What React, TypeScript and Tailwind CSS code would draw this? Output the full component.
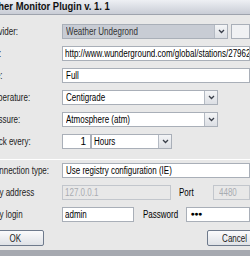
import React from "react";

const Arrow = () => (
  <div className="w-[13px] h-full shrink-0 border-l border-[#b4bac3] bg-gradient-to-b from-[#f4f5f7] to-[#dcdfe4] flex items-center justify-center">
    <svg width="7" height="5" viewBox="0 0 7 5">
      <path d="M1 1 L3.5 3.5 L6 1" stroke="#3a3f4a" strokeWidth="1.3" fill="none" />
    </svg>
  </div>
);

function T({ children, className = "" }: { children: React.ReactNode; className?: string }) {
  return (
    <span className={`inline-block whitespace-nowrap origin-left scale-x-[0.8] ${className}`}>{children}</span>
  );
}

function Label({ text, shift }: { text: string; shift: string }) {
  return (
    <div className="w-[62px] shrink-0 whitespace-nowrap text-[#222]">
      <T className={shift}>{text}</T>
    </div>
  );
}

export default function App() {
  return (
    <div
      className="w-[250px] h-[256px] overflow-hidden bg-[#e8e8e8] flex flex-col text-[10px] text-black"
      style={{ fontFamily: '"Liberation Sans", Arial, sans-serif' }}
    >
      <div className="h-[15px] shrink-0 bg-gradient-to-b from-[#eef0f4] to-[#c9cdd6] border-b border-[#9ea3ad] flex items-center whitespace-nowrap">
        <T className="ml-[-24px] font-bold text-[11.5px] text-[#111] scale-x-[0.82]">Weather Monitor Plugin v. 1. 1</T>
      </div>

      <div className="flex flex-col gap-[7px] mt-[9px]">
        <div className="flex items-center h-[15px]">
          <Label text="Provider:" shift="ml-[-14px]" />
          <div className="w-[178px] h-full flex border border-[#a9afb8] bg-[#c8ccd4]">
            <div className="flex-1 pl-[3px] flex items-center text-[#333]"><T>Weather Undegrond</T></div>
            <Arrow />
          </div>
          <div className="ml-[3px] w-[20px] h-full border border-[#a9afb8] bg-[#f0f1f3]" />
        </div>

        <div className="flex items-center h-[15px]">
          <Label text="URL:" shift="ml-[-17px]" />
          <div className="w-[200px] h-full border border-[#a9afb8] bg-white pl-[2px] flex items-center overflow-hidden">
            <T>http://www.wunderground.com/global/stations/27962</T>
          </div>
        </div>

        <div className="flex items-center h-[15px]">
          <Label text="Type:" shift="ml-[-17px]" />
          <div className="w-[200px] h-full border border-[#a9afb8] bg-white pl-[3px] flex items-center"><T>Full</T></div>
        </div>

        <div className="flex items-center h-[15px]">
          <Label text="Temperature:" shift="ml-[-17px]" />
          <div className="w-[156px] h-full flex border border-[#a9afb8] bg-white">
            <div className="flex-1 pl-[3px] flex items-center"><T>Centigrade</T></div>
            <Arrow />
          </div>
        </div>

        <div className="flex items-center h-[15px]">
          <Label text="Pressure:" shift="ml-[-14px]" />
          <div className="w-[156px] h-full flex border border-[#a9afb8] bg-white">
            <div className="flex-1 pl-[3px] flex items-center"><T>Atmosphere (atm)</T></div>
            <Arrow />
          </div>
        </div>

        <div className="flex items-center h-[15px]">
          <Label text="Check every:" shift="ml-[-16px]" />
          <div className="w-[29px] h-full border border-[#a9afb8] bg-white pr-[4px] flex items-center justify-end"><span>1</span></div>
          <div className="w-[81px] h-full flex border border-[#a9afb8] bg-white">
            <div className="flex-1 pl-[2px] flex items-center"><T>Hours</T></div>
            <Arrow />
          </div>
        </div>
      </div>

      <div className="mt-[10px] h-px bg-[#c9c9c9] border-b border-white" />

      <div className="flex flex-col gap-[7px] mt-[3px]">
        <div className="flex items-center h-[15px]">
          <Label text="Connection type:" shift="ml-[-11px]" />
          <div className="w-[200px] h-full border border-[#a9afb8] bg-white pl-[3px] flex items-center"><T>Use registry configuration (IE)</T></div>
        </div>

        <div className="flex items-center h-[15px]">
          <Label text="Proxy address" shift="ml-[-17px]" />
          <div className="w-[118px] h-full border border-[#c2c6cc] bg-[#e8e8e8] pl-[2px] flex items-center text-[#a8acb2]"><T>127.0.0.1</T></div>
          <div className="w-[45px] pl-[8px]"><T>Port</T></div>
          <div className="w-[40px] h-full border border-[#c2c6cc] bg-[#e8e8e8] pl-[5px] flex items-center text-[#a8acb2]"><T>4480</T></div>
        </div>

        <div className="flex items-center h-[15px]">
          <Label text="Proxy login" shift="ml-[-17px]" />
          <div className="w-[79px] h-full border border-[#a9afb8] bg-white pl-[2px] flex items-center"><T>admin</T></div>
          <div className="w-[54px] pl-[9px]"><T>Password</T></div>
          <div className="w-[70px] h-full border border-[#a9afb8] bg-white pl-[3px] flex items-center text-[7px] tracking-[-0.5px]">●●●</div>
        </div>
      </div>

      <div className="flex justify-between mt-[8px] h-[16px]">
        <button className="ml-[-14px] w-[58px] h-full border border-[#6e7a8c] rounded-[2px] bg-gradient-to-b from-[#fbfbfc] to-[#dfe2e7] flex items-center justify-center text-[#222]"><span className="inline-block scale-x-[0.8]">OK</span></button>
        <button className="mr-[-13px] w-[56px] h-full border border-[#6e7a8c] rounded-[2px] bg-gradient-to-b from-[#fbfbfc] to-[#dfe2e7] flex items-center justify-center text-[#222]"><span className="inline-block scale-x-[0.8]">Cancel</span></button>
      </div>

      <div className="mt-auto h-[6px] bg-[#a6a9b0]" />
    </div>
  );
}
